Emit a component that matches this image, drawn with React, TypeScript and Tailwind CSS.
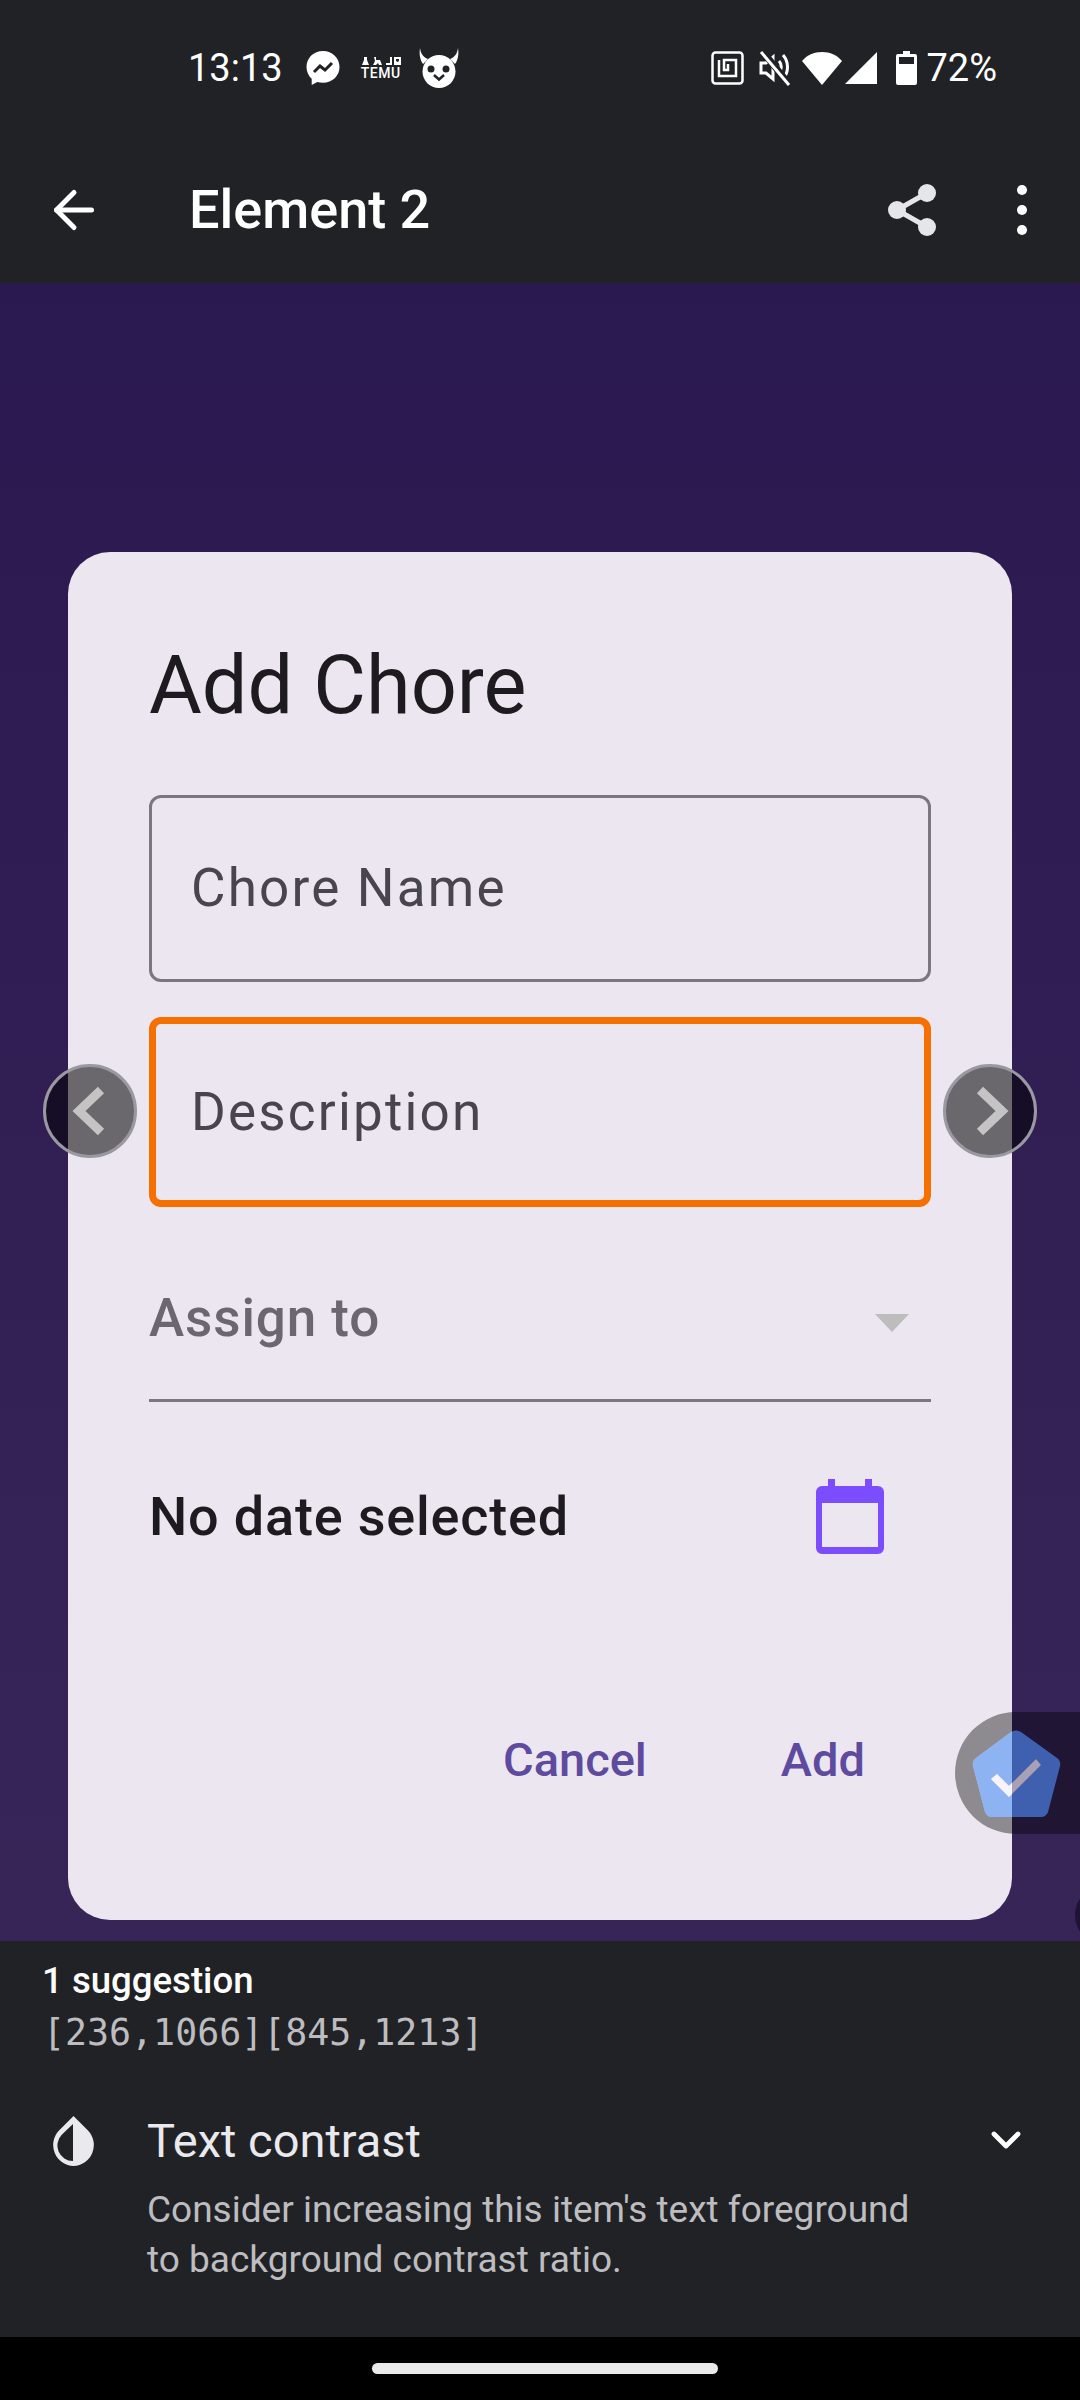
import { ArrowLeft, ChevronDown } from "lucide-react";

function StatusIcons() {
  return (
    <div className="flex items-center">
      <svg viewBox="0 0 36 36" className="ml-[22px] h-[36px] w-[36px]">
        <path fill="#fff" d="M18 1C8.600 1 1.500 7.900 1.500 17c0 4.800 2 8.900 5.200 11.800V35l5.600-3.100c1.800.5 3.700.8 5.700.8 9.400 0 16.500-6.900 16.500-15.700S27.400 1 18 1z" />
        <path fill="none" stroke="#212225" strokeWidth="3" d="M9 22l6-6 5 4 7-7" />
      </svg>
      <div className="ml-[20px] flex w-[40px] flex-col items-center">
        <svg viewBox="0 0 40 9" className="h-[9px] w-[40px]">
          <path fill="#fff" d="M3 0h3v3l2 5H1l2-5zM13 0h2v3h4l2 5h-3l-1-2-2 2h-3l2-4zM25 6h4V0h2v8h-6zM33 0h7v8h-7zM35 2v2l1.500 1L38 4V2z" />
        </svg>
        <span className="text-[14px] leading-[14px] font-medium tracking-[0.500px] text-white">TEMU</span>
      </div>
      <svg viewBox="0 0 40 40" className="ml-[18px] h-[40px] w-[40px]">
        <path fill="#fff" d="M1 0c.5 5 3 9 8 11l-5 5C1 12 0 6 1 0zM39 0c-.5 5-3 9-8 11l5 5c3-4 4-10 3-16z" />
        <circle cx="20" cy="23.500" r="16.500" fill="#fff" />
        <circle cx="12" cy="21" r="3.500" fill="#212225" />
        <circle cx="27" cy="21" r="3.500" fill="#212225" />
        <path fill="none" stroke="#212225" strokeWidth="2.500" d="M15 27l5 4.500 5-4.500" />
      </svg>
    </div>
  );
}

function SystemIcons() {
  return (
    <div className="flex items-center">
      <svg viewBox="0 0 33 34" className="h-[34px] w-[33px]">
        <rect x="1.500" y="1.500" width="30" height="31" rx="3" fill="none" stroke="#fff" strokeWidth="2.500" />
        <path fill="none" stroke="#fff" strokeWidth="2.500" d="M8 9v16h17V9H13v10h4V13" />
      </svg>
      <svg viewBox="0 0 32 36" className="ml-[15px] h-[36px] w-[32px]">
        <path fill="none" stroke="#fff" strokeWidth="3" d="M2 13h5l7-6v22l-7-6H2z" />
        <path fill="none" stroke="#fff" strokeWidth="3" d="M20 11c3 3 3 9 0 12M24 5c6 7 6 17 0 24" />
        <path fill="none" stroke="#212225" strokeWidth="7" d="M4 2l26 32" />
        <path fill="none" stroke="#fff" strokeWidth="3" d="M2 2l28 33" />
      </svg>
      <svg viewBox="0 0 40 33" className="ml-[11px] h-[33px] w-[40px]">
        <path fill="#fff" d="M20 33L0 9C5 3 12 0 20 0s15 3 20 9z" />
      </svg>
      <svg viewBox="0 0 32 32" className="ml-[3px] h-[32px] w-[32px]">
        <path fill="#fff" d="M32 0v32H0z" />
      </svg>
      <svg viewBox="0 0 21 34" className="ml-[19px] h-[34px] w-[21px]">
        <path fill="#fff" d="M7 0h7v3h5a2 2 0 012 2v27a2 2 0 01-2 2H2a2 2 0 01-2-2V5a2 2 0 012-2h5z" />
        <rect x="3" y="6" width="15" height="7" fill="#212225" />
      </svg>
      <span className="ml-[9px] text-[38px] leading-none text-white">72%</span>
    </div>
  );
}

function TextField({ label, focused }: { label: string; focused?: boolean }) {
  return (
    <div
      className={
        focused
          ? "flex h-[190px] items-center rounded-[12px] border-[7px] border-[#f57000] pl-[35px]"
          : "flex h-[187px] items-center rounded-[12px] border-[3px] border-[#7b7680] pl-[39px]"
      }
    >
      <span className="text-[53px] leading-none tracking-[2.200px] text-[#49454f]">{label}</span>
    </div>
  );
}

function Dialog() {
  return (
    <div className="mx-[68px] mt-[269px] h-[1368px] rounded-[42px] bg-[#ece6f0] px-[81px] pt-[91px]">
      <h2 className="text-[81px] leading-[86px] text-[#1d1b20]">Add Chore</h2>
      <div className="mt-[66px]">
        <TextField label="Chore Name" />
      </div>
      <div className="mt-[35px]">
        <TextField label="Description" focused />
      </div>
      <div className="mt-[53px] flex h-[142px] items-start justify-between border-b-[3px] border-[#7b7680] pr-[22px]">
        <span className="text-[53px] leading-[116px] font-medium tracking-[0.900px] text-[#6b6670]">Assign to</span>
        <svg viewBox="0 0 34 18" className="mt-[54px] h-[18px] w-[34px]">
          <path fill="#bdbdbd" d="M0 0h34L17 18z" />
        </svg>
      </div>
      <div className="mt-[77px] flex items-center justify-between pr-[47px]">
        <span className="text-[54px] leading-none font-medium tracking-[0.800px] text-[#1d1b20]">No date selected</span>
        <svg viewBox="0 0 68 75" className="h-[75px] w-[68px]">
          <path fill="#7c4dff" d="M12 0h7v7h30V0h7v7h6a6 6 0 016 6v56a6 6 0 01-6 6H6a6 6 0 01-6-6V13a6 6 0 016-6h6z" />
          <rect x="6" y="24" width="56" height="44" fill="#ece6f0" />
        </svg>
      </div>
      <div className="mt-[182px] flex justify-end gap-[134px] pr-[66px]">
        <span className="text-[47px] leading-none font-medium text-[#5e4b9f]">Cancel</span>
        <span className="text-[47px] leading-none font-medium text-[#5e4b9f]">Add</span>
      </div>
    </div>
  );
}

function NavCircle({ points, left }: { points: string; left: string }) {
  return (
    <div className={left + " absolute top-[1064px] h-[94px] w-[94px] rounded-full border-[3px] border-[#9a98a0] bg-black/55"}>
      <svg viewBox="0 0 88 88" className="h-[88px] w-[88px]">
        <polyline points={points} fill="none" stroke="#c4c4c4" strokeWidth="9" />
      </svg>
    </div>
  );
}

export default function App() {
  return (
    <div className="relative flex h-[2400px] w-[1080px] flex-col overflow-hidden bg-black font-['Roboto',sans-serif]">
      <div className="h-[283px] bg-[#212225]">
        <div className="flex h-[136px] items-center justify-between pr-[83px] pl-[188px]">
          <div className="flex items-center">
            <span className="text-[38px] leading-none text-white">13:13</span>
            <StatusIcons />
          </div>
          <SystemIcons />
        </div>
        <div className="flex h-[147px] items-center pr-[50px] pl-[44px]">
          <ArrowLeft className="h-[60px] w-[60px] text-white" strokeWidth={2} />
          <span className="ml-[85px] text-[54px] leading-none font-medium text-white">Element 2</span>
          <div className="ml-auto flex items-center gap-[81px]">
            <svg viewBox="0 0 48 52" className="h-[52px] w-[48px]">
              <path fill="none" stroke="#e6e6ea" strokeWidth="5" d="M39 9L9 26l30 17" />
              <circle cx="39" cy="9" r="9" fill="#e6e6ea" />
              <circle cx="9" cy="26" r="9" fill="#e6e6ea" />
              <circle cx="39" cy="43" r="9" fill="#e6e6ea" />
            </svg>
            <div className="mr-[3px] flex flex-col gap-[10px]">
              <div className="h-[10px] w-[10px] rounded-full bg-white" />
              <div className="h-[10px] w-[10px] rounded-full bg-white" />
              <div className="h-[10px] w-[10px] rounded-full bg-white" />
            </div>
          </div>
        </div>
      </div>

      <div className="h-[1658px] bg-gradient-to-b from-[#2a1850] to-[#382558]">
        <Dialog />
      </div>

      <div className="h-[396px] bg-[#212225] pt-[19px]">
        <p className="pl-[42px] text-[36.600px] leading-[42px] font-medium text-white">1 suggestion</p>
        <p className="mt-[10px] pl-[43px] font-['DejaVu_Sans_Mono',monospace] text-[36.600px] leading-[42px] text-[#bdbdc0]">
          [236,1066][845,1213]
        </p>
        <div className="mt-[60px] flex pr-[50px] pl-[52px]">
          <svg viewBox="0 0 43 50" className="mt-[2px] h-[50px] w-[43px] shrink-0">
            <path fill="#e9e9ee" fillRule="evenodd" d="M21.500 0l14.500 14.500a21 21 0 01-14.500 35.500A21 21 0 017 14.500zM21 8L10 18.500A15.500 15.500 0 0021 45z" />
          </svg>
          <div className="ml-[52px] flex-1">
            <p className="text-[47px] leading-[54px] text-[#e9e9ee]">Text contrast</p>
            <p className="mt-[17px] w-[790px] text-[37px] leading-[50px] text-[#bdbdc0]">
              Consider increasing this item's text foreground to background contrast ratio.
            </p>
          </div>
          <ChevronDown className="mt-[2px] h-[48px] w-[48px] text-white" strokeWidth={2.4} />
        </div>
      </div>

      <div className="flex h-[63px] items-center justify-center pl-[10px]">
        <div className="h-[11px] w-[346px] rounded-full bg-[#eaeaea]" />
      </div>

      {/* overlays sitting on top of the app */}
      <NavCircle left="left-[43px]" points="55,23 33,44 55,65" />
      <NavCircle left="left-[943px]" points="34,23 56,44 34,65" />
      <svg viewBox="0 0 125 122" className="absolute top-[1712px] left-[955px] h-[122px] w-[125px]">
        <path
          fillRule="evenodd"
          fillOpacity="0.4"
          d="M61 0H125V122H61A61 61 0 0 1 61 0ZM56 20L21 46Q17 49 18 54L30 100Q32 105 37 105L86 105Q91 105 93 100L105 54Q106 49 102 46L66 20Q61 17 56 20Z"
        />
        <path
          fill="#468cf2"
          fillOpacity="0.57"
          fillRule="evenodd"
          d="M56 20L21 46Q17 49 18 54L30 100Q32 105 37 105L86 105Q91 105 93 100L105 54Q106 49 102 46L66 20Q61 17 56 20ZM42 62L36 67L54 85L86 53L81 47L54 74Z"
        />
        <path fill="#fff" fillOpacity="0.57" d="M42 62L36 67L54 85L86 53L81 47L54 74Z" />
      </svg>
      <div className="absolute top-[1885px] left-[1075px] h-[60px] w-[60px] rounded-full bg-[#1d1433]" />
    </div>
  );
}
